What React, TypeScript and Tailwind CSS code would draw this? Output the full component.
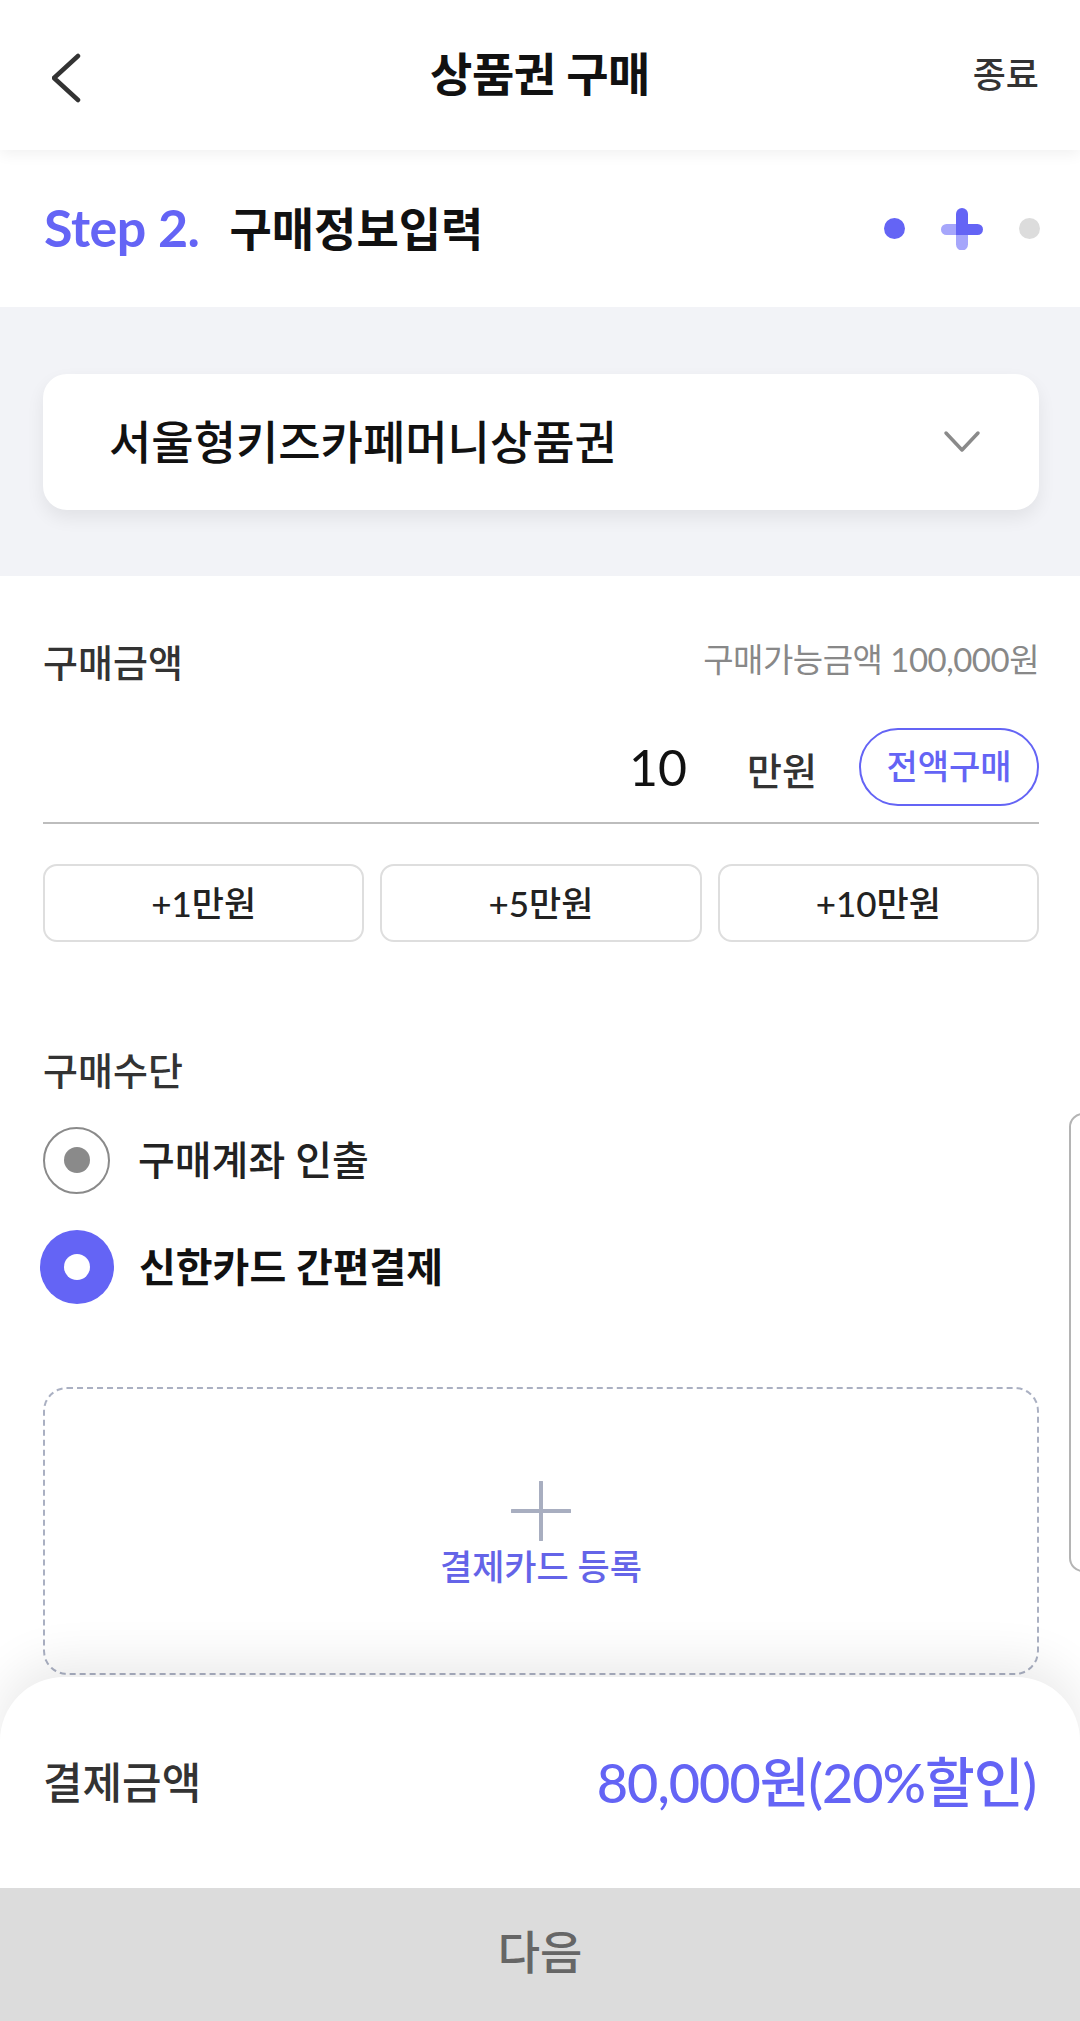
import React from "react";

function BackIcon() {
  return (
    <svg width="40" height="56" viewBox="0 0 40 56" fill="none">
      <path d="M34 6 L10 28 L34 50" stroke="#333" strokeWidth="4.5" strokeLinecap="round" strokeLinejoin="round" transform="translate(-8,0)" />
    </svg>
  );
}

function StepPlus() {
  return (
    <svg width="42" height="42" viewBox="0 0 42 42">
      <line x1="5.5" y1="21.5" x2="21" y2="21.5" stroke="#a6a6fb" strokeWidth="11" strokeLinecap="round" />
      <line x1="21" y1="21" x2="21" y2="36.5" stroke="#a6a6fb" strokeWidth="12" strokeLinecap="round" />
      <line x1="21" y1="6" x2="21" y2="21" stroke="#6464f5" strokeWidth="12" strokeLinecap="round" />
      <rect x="15" y="16" width="12" height="11" fill="#6464f5" />
      <line x1="21" y1="21.5" x2="36.5" y2="21.5" stroke="#6464f5" strokeWidth="11" strokeLinecap="round" />
    </svg>
  );
}

function ChevronDown() {
  return (
    <svg width="38" height="24" viewBox="0 0 38 24" fill="none">
      <path d="M3 3 L19 20 L35 3" stroke="#8a8a8a" strokeWidth="3.5" strokeLinecap="round" strokeLinejoin="round" />
    </svg>
  );
}

function PlusBig() {
  return (
    <svg width="60" height="60" viewBox="0 0 60 60" fill="none">
      <line x1="30" y1="1" x2="30" y2="59" stroke="#a8aec0" strokeWidth="4" strokeLinecap="round" />
      <line x1="1" y1="30" x2="59" y2="30" stroke="#a8aec0" strokeWidth="4" strokeLinecap="round" />
    </svg>
  );
}

export default function App() {
  return (
    <div className="relative w-[1080px] h-[2021px] overflow-hidden bg-white font-['Lato','Noto_Sans_CJK_KR',sans-serif] flex flex-col">
      {/* Header */}
      <div className="relative z-10 h-[150px] shrink-0 bg-white shadow-[0_4px_14px_rgba(0,0,0,0.06)] flex items-center justify-center">
        <div className="absolute left-[52px] top-[50px]">
          <BackIcon />
        </div>
        <div className="text-[46px] font-bold text-[#111] tracking-[-0.5px] leading-none mt-[-2px]">상품권 구매</div>
        <div className="absolute right-[41px] top-[56px] text-[36px] font-medium text-[#333] leading-none">종료</div>
      </div>

      {/* Step */}
      <div className="h-[157px] shrink-0 bg-white flex items-center pl-[44px] pr-[40px]">
        <span className="text-[52px] font-bold text-[#6464f5] leading-none tracking-[-0.5px] mt-[-4px]">Step 2.</span>
        <span className="ml-[30px] text-[46px] font-bold text-[#111] leading-none">구매정보입력</span>
        <div className="ml-auto flex items-center">
          <div className="w-[21px] h-[21px] rounded-full bg-[#6464f5]" />
          <div className="ml-[36px]">
            <StepPlus />
          </div>
          <div className="ml-[36px] w-[21px] h-[21px] rounded-full bg-[#dcdcdc]" />
        </div>
      </div>

      {/* Gray select area */}
      <div className="h-[269px] shrink-0 bg-[#f2f3f7] pl-[43px] pr-[41px] pt-[67px]">
        <div className="h-[136px] bg-white rounded-[24px] shadow-[0_8px_18px_rgba(0,0,0,0.07)] flex items-center pl-[66px] pr-[58px]">
          <span className="text-[46px] font-medium text-[#111] leading-none">서울형키즈카페머니상품권</span>
          <div className="ml-auto">
            <ChevronDown />
          </div>
        </div>
      </div>

      {/* Purchase amount */}
      <div className="flex-1 flex flex-col pl-[43px] pr-[41px]">
        <div className="mt-[52px] h-[68px] flex items-center justify-between">
          <span className="text-[38px] font-medium text-[#333] leading-none">구매금액</span>
          <span className="text-[33px] text-[#888] leading-none tracking-[-0.5px] mt-[-6px]">구매가능금액 100,000원</span>
        </div>
        <div className="mt-[32px] h-[78px] flex items-center justify-end">
          <span className="text-[50px] text-[#111] leading-none">10</span>
          <span className="ml-[60px] text-[38px] font-medium text-[#333] leading-none mt-[6px]">만원</span>
          <div className="ml-[42px] w-[180px] h-[78px] rounded-full border-2 border-[#6464f5] flex items-center justify-center">
            <span className="text-[34px] font-medium text-[#6464f5] leading-none mt-[-2px]">전액구매</span>
          </div>
        </div>
        <div className="mt-[16px] h-[2px] bg-[#bdbdbd]" />
        <div className="mt-[40px] grid grid-cols-3 gap-[16px]">
          {["+1만원", "+5만원", "+10만원"].map((t) => (
            <div key={t} className="h-[78px] rounded-[14px] border-2 border-[#dedede] flex items-center justify-center">
              <span className="text-[35px] font-medium text-[#222] leading-none">{t}</span>
            </div>
          ))}
        </div>

        {/* Payment method */}
        <div className="mt-[108px] h-[40px] flex items-center">
          <span className="text-[38px] font-medium text-[#333] leading-none">구매수단</span>
        </div>
        <div className="mt-[36px] h-[68px] flex items-center">
          <div className="w-[67px] h-[67px] rounded-full border-2 border-[#8a8a8a] flex items-center justify-center">
            <div className="w-[26px] h-[26px] rounded-full bg-[#8a8a8a]" />
          </div>
          <span className="ml-[28px] text-[40px] font-medium text-[#222] leading-none">구매계좌 인출</span>
        </div>
        <div className="mt-[36px] h-[74px] flex items-center">
          <div className="ml-[-3px] w-[74px] h-[74px] rounded-full bg-[#6464f5] flex items-center justify-center">
            <div className="w-[26px] h-[26px] rounded-full bg-white" />
          </div>
          <span className="ml-[25px] text-[40px] font-bold text-[#111] leading-none">신한카드 간편결제</span>
        </div>

        <div className="mt-[83px] h-[288px] rounded-[24px] border-2 border-dashed border-[#aab0c2] flex flex-col items-center pt-[92px]">
          <PlusBig />
          <span className="mt-[8px] text-[35px] font-medium text-[#6464e8] leading-none">결제카드 등록</span>
        </div>
      </div>

      {/* Bottom sheet */}
      <div className="relative z-10 mt-[2px] h-[344px] shrink-0 bg-white rounded-t-[64px] shadow-[0_-14px_50px_rgba(0,0,0,0.09)] flex flex-col overflow-hidden">
        <div className="h-[211px] flex items-center justify-between pl-[43px] pr-[44px]">
          <span className="text-[43px] font-medium text-[#333] leading-none">결제금액</span>
          <span className="text-[54px] font-medium text-[#6464f5] leading-none tracking-[-1px]">80,000원(20%할인)</span>
        </div>
        <div className="flex-1 bg-[#dcdcdc] flex items-center justify-center">
          <span className="text-[46px] font-medium text-[#666] leading-none mt-[-6px]">다음</span>
        </div>
      </div>

      {/* Right edge floating element */}
      <div className="absolute left-[1069px] top-[1113px] w-[40px] h-[459px] rounded-l-[14px] border-2 border-[#b4b4b4] bg-white" />
    </div>
  );
}
